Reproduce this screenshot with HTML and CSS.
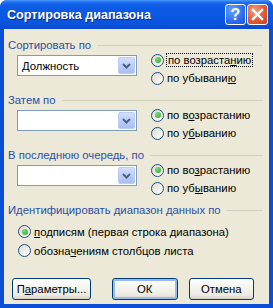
FILE: index.html
```html
<!DOCTYPE html>
<html lang="ru">

<head>
    <meta charset="UTF-8">
    <title>Сортировка диапазона</title>
    <link rel="stylesheet" href="styles.css">
</head>

<body>
    <div class="window">
        <div class="titlebar">
            <span class="title">Сортировка диапазона</span>
            <div class="caption-btns">
                <div class="cap-btn help">?</div>
                <div class="cap-btn close">
                    <svg width="13" height="13" viewBox="0 0 13 13">
                        <path d="M2 2 L11 11 M11 2 L2 11" stroke="#fff" stroke-width="2.4" stroke-linecap="square" />
                    </svg>
                </div>
            </div>
        </div>

        <div class="content">
            <div class="group">
                <div class="group-head"><span>Сортировать по</span><i></i></div>
                <div class="group-row">
                    <div class="combo">
                        <span class="combo-text">Должность</span>
                        <span class="drop"><svg width="9" height="6" viewBox="0 0 9 6"><path d="M1 1 L4.5 4.5 L8 1" fill="none" stroke="#4d6185" stroke-width="2" /></svg></span>
                    </div>
                    <div class="radios">
                        <label class="radio checked"><span class="dot"></span><span class="focus">по возраста<u>н</u>ию</span></label>
                        <label class="radio"><span class="dot"></span><span>по убывани<u>ю</u></span></label>
                    </div>
                </div>
            </div>

            <div class="group">
                <div class="group-head"><span>Затем по</span><i></i></div>
                <div class="group-row">
                    <div class="combo">
                        <span class="combo-text"></span>
                        <span class="drop"><svg width="9" height="6" viewBox="0 0 9 6"><path d="M1 1 L4.5 4.5 L8 1" fill="none" stroke="#4d6185" stroke-width="2" /></svg></span>
                    </div>
                    <div class="radios">
                        <label class="radio checked"><span class="dot"></span><span>по в<u>о</u>зрастанию</span></label>
                        <label class="radio"><span class="dot"></span><span>по у<u>б</u>ыванию</span></label>
                    </div>
                </div>
            </div>

            <div class="group">
                <div class="group-head"><span>В последнюю очередь, по</span><i></i></div>
                <div class="group-row">
                    <div class="combo">
                        <span class="combo-text"></span>
                        <span class="drop"><svg width="9" height="6" viewBox="0 0 9 6"><path d="M1 1 L4.5 4.5 L8 1" fill="none" stroke="#4d6185" stroke-width="2" /></svg></span>
                    </div>
                    <div class="radios">
                        <label class="radio checked"><span class="dot"></span><span>по во<u>з</u>растанию</span></label>
                        <label class="radio"><span class="dot"></span><span>по уб<u>ы</u>ванию</span></label>
                    </div>
                </div>
            </div>

            <div class="group last">
                <div class="group-head"><span>Идентифицировать диапазон данных по</span><i></i></div>
                <div class="radios wide">
                    <label class="radio checked"><span class="dot"></span><span><u>п</u>одписям (первая строка диапазона)</span></label>
                    <label class="radio"><span class="dot"></span><span>обозна<u>ч</u>ениям столбцов листа</span></label>
                </div>
            </div>

            <div class="buttons">
                <button class="btn params">П<u>а</u>раметры...</button>
                <button class="btn default">ОК</button>
                <button class="btn">Отмена</button>
            </div>
        </div>
    </div>
</body>

</html>
```

FILE: styles.css
```css
* {
    box-sizing: border-box;
}

body {
    margin: 0;
    width: 273px;
    height: 308px;
    overflow: hidden;
    font-family: 'Liberation Sans', sans-serif;
    font-size: 11.3px;
    color: #000;
}

.window {
    width: 273px;
    height: 308px;
    display: flex;
    flex-direction: column;
    background: #0b4fd6;
    border-radius: 7px 7px 0 0;
    overflow: hidden;
}

.titlebar {
    height: 29px;
    flex: none;
    display: flex;
    align-items: center;
    justify-content: space-between;
    padding: 0 5px 0 7px;
    background: linear-gradient(#4a98fa 0%, #1d6ef0 8%, #0b5ce6 20%, #0a57e2 60%, #0b53dc 85%, #0a48c8 100%);
}

.title {
    font-family: 'Liberation Sans', sans-serif;
    font-weight: bold;
    font-size: 12.6px;
    color: #fff;
    text-shadow: 1px 1px 0 #0a2a8a;
    margin-top: 1px;
}

.caption-btns {
    display: flex;
    gap: 1px;
}

.cap-btn {
    width: 21px;
    height: 21px;
    border: 1px solid #fff;
    border-radius: 3px;
    display: flex;
    align-items: center;
    justify-content: center;
    color: #fff;
    font-family: 'Liberation Sans', sans-serif;
    font-weight: bold;
    font-size: 16px;
}

.help {
    background: radial-gradient(circle at 35% 30%, #6fa3fb 0%, #2a6cf0 60%, #1a55d8 100%);
}

.close {
    background: radial-gradient(circle at 35% 30%, #f0a080 0%, #e05a32 55%, #c8401c 100%);
}

.content {
    flex: 1;
    margin: 0 4px 4px 4px;
    background: #ece9d8;
    padding: 9px 4px 0 4px;
    display: flex;
    flex-direction: column;
}

.group {
    height: 55px;
    flex: none;
}

.group.last {
    height: 75px;
}

.group-head {
    height: 13px;
    display: flex;
    align-items: center;
    color: #2a4fa8;
}

.group-head i {
    flex: 1;
    height: 1px;
    background: #d0d0bf;
    margin: 1px 2px 0 6px;
}

.group-row {
    display: flex;
    height: 36px;
}

.combo {
    margin: 4px 0 0 9px;
    width: 120px;
    height: 21px;
    border: 1px solid #7f9db9;
    background: #fff;
    display: flex;
    align-items: center;
    padding: 1px;
}

.combo-text {
    flex: 1;
    padding-left: 3px;
}

.drop {
    width: 17px;
    height: 17px;
    border: 1px solid #b8ccf5;
    border-radius: 2px;
    background: linear-gradient(#d2defc, #b8cbf6 60%, #a8c0f0);
    display: flex;
    align-items: center;
    justify-content: center;
}

.radios {
    margin-left: 14px;
    display: flex;
    flex-direction: column;
}

.radios.wide {
    margin: 6px 0 0 10px;
}

.radio {
    height: 18px;
    display: flex;
    align-items: center;
    gap: 3px;
    white-space: nowrap;
}

.radios.wide .radio {
    height: 19px;
}

.dot {
    width: 13px;
    height: 13px;
    border: 1px solid #1c5180;
    border-radius: 50%;
    background: linear-gradient(135deg, #dcdad0, #fff);
    display: flex;
    align-items: center;
    justify-content: center;
}

.checked .dot::after {
    content: '';
    width: 6px;
    height: 6px;
    border-radius: 50%;
    background: radial-gradient(circle at 35% 35%, #7de07a, #21a121);
}

.focus {
    outline: 1px dotted #000;
    outline-offset: 0;
    padding: 0 1px;
}

.buttons {
    display: flex;
    padding: 0 0 0 4px;
}

.btn {
    height: 22px;
    width: 68px;
    font-family: 'Liberation Sans', sans-serif;
    font-size: 11.3px;
    color: #000;
    border: 1px solid #003c74;
    border-radius: 3px;
    background: linear-gradient(#fff 0%, #f5f4ee 40%, #ecebe3 80%, #d6d0c5 100%);
    padding: 0;
    margin-right: 11px;
}

.btn.params {
    width: 82px;
    margin-right: 21px;
}

.btn.default {
    box-shadow: inset 0 0 0 2px #9cb9ef;
}
```
